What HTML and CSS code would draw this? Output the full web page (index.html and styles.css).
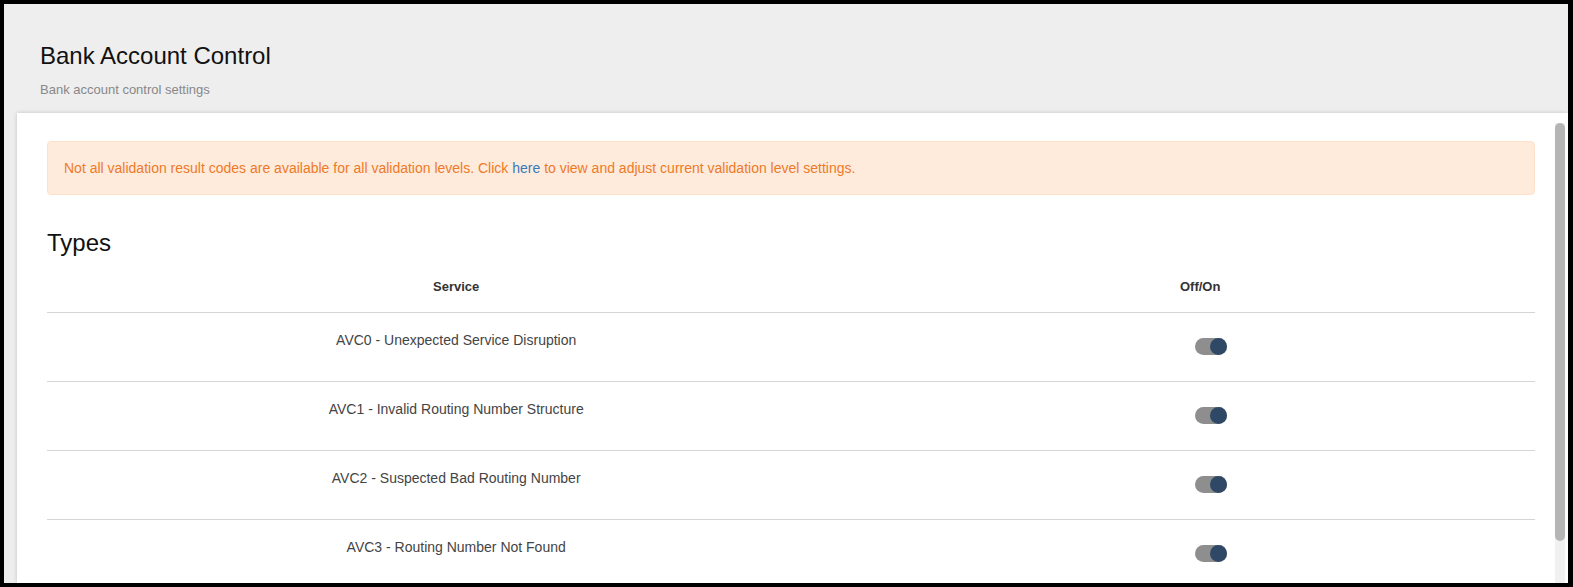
FILE: index.html
```html
<!DOCTYPE html>
<html lang="en">
<head>
    <meta charset="UTF-8">
    <meta name="viewport" content="width=device-width, initial-scale=1.0">
    <title>Bank Account Control</title>
    <link rel="stylesheet" href="styles.css">
</head>
<body>
    <div class="frame">
        <div class="page-header">
            <h1 class="page-title">Bank Account Control</h1>
            <p class="page-subtitle">Bank account control settings</p>
        </div>

        <div class="card">
            <div class="card-body">
                <div class="alert alert-warning">
                    Not all validation result codes are available for all validation levels. Click <a href="#">here</a> to view and adjust current validation level settings.
                </div>

                <h2 class="section-title">Types</h2>

                <table class="types-table">
                    <thead>
                        <tr>
                            <th class="col-service">Service</th>
                            <th class="col-toggle">Off/On</th>
                        </tr>
                    </thead>
                    <tbody>
                        <tr>
                            <td>AVC0 - Unexpected Service Disruption</td>
                            <td><span class="switch"><span class="switch-knob"></span></span></td>
                        </tr>
                        <tr>
                            <td>AVC1 - Invalid Routing Number Structure</td>
                            <td><span class="switch"><span class="switch-knob"></span></span></td>
                        </tr>
                        <tr>
                            <td>AVC2 - Suspected Bad Routing Number</td>
                            <td><span class="switch"><span class="switch-knob"></span></span></td>
                        </tr>
                        <tr>
                            <td>AVC3 - Routing Number Not Found</td>
                            <td><span class="switch"><span class="switch-knob"></span></span></td>
                        </tr>
                    </tbody>
                </table>
            </div>

            <!-- scrollbar of the card -->
            <div class="scroll-track">
                <div class="scroll-thumb"></div>
            </div>
        </div>
    </div>
</body>
</html>
```

FILE: styles.css
```css
html, body {
    margin: 0;
    height: 100%;
}

body {
    background: #000;
    font-family: "Liberation Sans", Arial, sans-serif;
    color: #333;
}

.frame {
    box-sizing: border-box;
    height: 100%;
    border-style: solid;
    border-color: #000;
    border-width: 4px 5px 4px 4px;
    background: #eeeeee;
    display: flex;
    flex-direction: column;
    overflow: hidden;
}

.page-header {
    padding: 39px 36px 15px 36px;
    flex: none;
}

.page-title {
    margin: 0;
    font-size: 24px;
    line-height: 26px;
    font-weight: normal;
    color: #111;
}

.page-subtitle {
    margin: 13px 0 0 0;
    font-size: 13px;
    line-height: 16px;
    color: #888;
}

.card {
    flex: 1;
    min-height: 0;
    margin-left: 13px;
    background: #fff;
    box-shadow: 0 0 4px rgba(0, 0, 0, 0.18);
    display: flex;
    overflow: hidden;
}

.card-body {
    flex: 1;
    min-width: 0;
    padding: 28px 20px 45px 30px;
}

.scroll-track {
    flex: none;
    width: 10px;
    margin-right: 3px;
    margin-top: 10px;
    background: #f1f1f1;
}

.scroll-thumb {
    height: 418px;
    background: #b5b5b5;
    border-radius: 5px;
}

.alert {
    border-radius: 4px;
    padding: 17px 16px;
    font-size: 14px;
    line-height: 18px;
}

.alert-warning {
    background: #feebdc;
    border: 1px solid #fde2c9;
    color: #ee7a28;
}

.alert a {
    color: #3a78bb;
    text-decoration: none;
}

.section-title {
    margin: 35px 0 6px 0;
    font-size: 24px;
    line-height: 25px;
    font-weight: normal;
    color: #111;
}

.types-table {
    width: 100%;
    border-collapse: collapse;
}

.types-table th {
    font-size: 13px;
    line-height: 20px;
    font-weight: bold;
    color: #333;
    padding: 16px 8px 15px 8px;
    text-align: center;
    border-bottom: 1px solid #d5d5d5;
}

.col-service {
    width: 55%;
}

.types-table td {
    font-size: 14px;
    line-height: 20px;
    color: #444;
    text-align: center;
    vertical-align: top;
    padding: 17px 8px 16px 8px;
    border-bottom: 1px solid #d5d5d5;
}

.switch {
    display: inline-block;
    position: relative;
    width: 32px;
    height: 17px;
    margin: 8px 0 10px 22px;
    border-radius: 9px;
    background: #8e8e8e;
    vertical-align: top;
}

.switch-knob {
    position: absolute;
    top: 0;
    right: 0;
    width: 17px;
    height: 17px;
    border-radius: 50%;
    background: #2e4866;
}
```
